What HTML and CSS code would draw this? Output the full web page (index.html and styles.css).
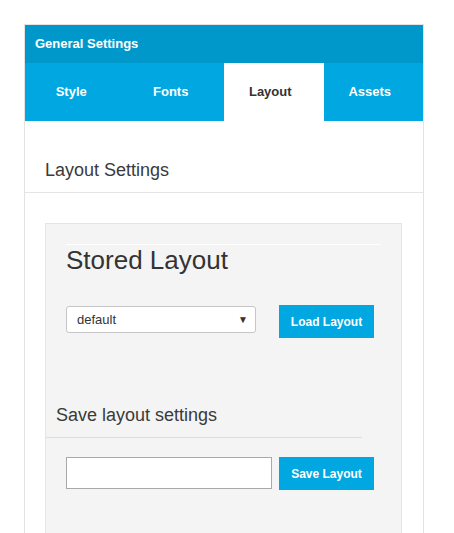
FILE: index.html
```html
<!DOCTYPE html>
<html>
<head>
<meta charset="utf-8">
<link rel="stylesheet" href="styles.css">
</head>
<body>
<div class="card">
  <div class="card-header">General Settings</div>
  <div class="tabs">
    <div class="tab">Style</div>
    <div class="tab">Fonts</div>
    <div class="tab active">Layout</div>
    <div class="tab">Assets</div>
  </div>
  <div class="section-title">Layout Settings</div>
  <div class="section-body">
    <div class="well">
      <div class="stored">
        <h2 class="stored-title">Stored Layout</h2>
        <div class="row load-row">
          <div class="select">
            <span>default</span>
            <span class="arrow">▼</span>
          </div>
          <button class="btn load">Load Layout</button>
        </div>
      </div>
      <div class="save-title">Save layout settings</div>
      <div class="row save-row">
        <div class="input"></div>
        <button class="btn save">Save Layout</button>
      </div>
    </div>
  </div>
</div>
</body>
</html>
```
FILE: styles.css
```css
html, body {
  margin: 0;
  padding: 0;
  background: #fff;
  font-family: "Liberation Sans", Arial, sans-serif;
  color: #333;
}
body {
  padding: 24px 0 0 24px;
}
.card {
  width: 398px;
  border: 1px solid #e3e3e3;
  border-bottom: none;
  height: 520px;
  overflow: hidden;
}
.card-header {
  height: 38px;
  background: #0098cb;
  color: #fff;
  font-weight: bold;
  font-size: 13px;
  line-height: 38px;
  padding-left: 10px;
}
.tabs {
  display: flex;
  height: 58px;
  background: #00a7e1;
}
.tab {
  flex: 1;
  color: #fff;
  font-weight: bold;
  font-size: 13px;
  line-height: 58px;
  text-align: center;
  padding-right: 7px;
}
.tab.active {
  background: #fff;
  color: #333;
}
.section-title {
  height: 72px;
  box-sizing: border-box;
  padding: 39px 0 0 20px;
  font-size: 18px;
  color: #3a3a3a;
  border-bottom: 1px solid #e5e5e5;
}
.section-body {
  padding: 30px 21px 0 20px;
}
.well {
  background: #f4f4f4;
  border: 1px solid #e5e5e5;
  height: 320px;
}
.stored {
  margin: 20px 20px 0 20px;
  border-top: 1px solid #fff;
}
.stored-title {
  margin: 0;
  font-weight: normal;
  font-size: 26px;
  color: #333;
  line-height: 30px;
  padding-top: 0;
  height: 31px;
}
.row {
  display: flex;
  align-items: flex-start;
}
.load-row {
  margin-top: 29px;
}
.select {
  height: 25px;
  background: #fff;
  border: 1px solid #c6c6c6;
  border-radius: 3px;
  display: flex;
  align-items: center;
  justify-content: space-between;
  padding: 0 7px 0 10px;
  box-sizing: content-box;
  width: 171px;
  font-size: 13px;
  color: #333;
  margin-top: 1px;
}
.arrow {
  font-size: 10px;
  color: #333;
}
.btn {
  border: none;
  background: #00a7e1;
  color: #fff;
  font-family: "Liberation Sans", Arial, sans-serif;
  font-weight: bold;
  font-size: 12px;
  width: 95px;
  height: 33px;
  padding: 0;
}
.load {
  margin-left: 23px;
}
.save-title {
  margin-top: 67px;
  padding-left: 10px;
  font-size: 18px;
  color: #3a3a3a;
  width: 306px;
  height: 32px;
  border-bottom: 1px solid #dddddd;
}
.save-row {
  margin: 19px 0 0 20px;
}
.input {
  width: 204px;
  height: 30px;
  background: #fff;
  border: 1px solid #a9a9a9;
}
.save {
  margin-left: 7px;
}
```
